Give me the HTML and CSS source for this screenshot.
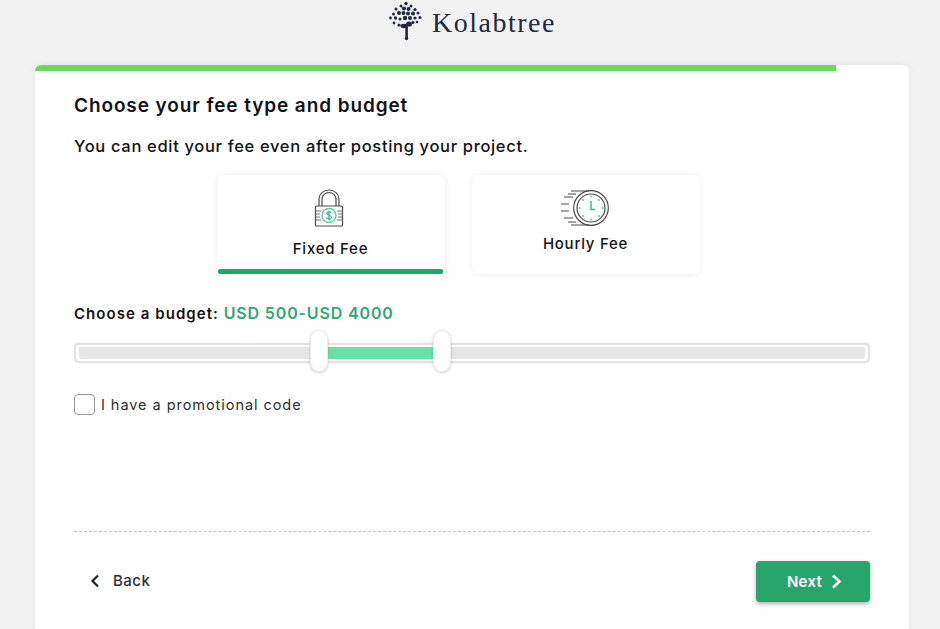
FILE: index.html
```html
<!DOCTYPE html>
<html lang="en">
<head>
<meta charset="utf-8">
<title>Kolabtree</title>
<link rel="stylesheet" href="styles.css">
</head>
<body>
<header class="top">
  <svg class="logo-mark" width="36" height="40" viewBox="0 0 36 40" fill="#22293f">
    <circle cx="17" cy="2.500" r="1.700"/><circle cx="12" cy="5" r="1.500"/><circle cx="22" cy="5" r="1.500"/>
    <circle cx="7" cy="8" r="1.500"/><circle cx="15" cy="7.500" r="2"/><circle cx="19.500" cy="8" r="2"/><circle cx="26" cy="8.500" r="1.600"/>
    <circle cx="4.500" cy="13" r="1.500"/><circle cx="10" cy="12" r="2"/><circle cx="14.500" cy="12" r="2"/><circle cx="19" cy="12.500" r="2"/><circle cx="24" cy="12.500" r="2"/><circle cx="29" cy="12" r="1.500"/>
    <circle cx="1.500" cy="17" r="1.400"/><circle cx="6.500" cy="17" r="1.700"/><circle cx="11" cy="18" r="1.500"/><circle cx="16" cy="17" r="2.200"/><circle cx="21" cy="17" r="2"/><circle cx="26" cy="17" r="1.600"/><circle cx="31" cy="16.500" r="1.500"/>
    <circle cx="5" cy="22" r="1.400"/><circle cx="10" cy="24" r="1.600"/><circle cx="24" cy="21.500" r="1.500"/><circle cx="28" cy="21" r="1.300"/>
    <ellipse cx="15" cy="25" rx="3.500" ry="2.200"/><ellipse cx="20" cy="23" rx="3" ry="2.600"/>
    <path d="M16.300 24h2.600v13h-2.600z"/><circle cx="17.500" cy="37.500" r="1.700"/>
  </svg>
  <span class="logo-text">Kolabtree</span>
</header>
<main class="card">
  <div class="progress"></div>
  <div class="body">
    <h1 class="title">Choose your fee type and budget</h1>
    <p class="sub">You can edit your fee even after posting your project.</p>
    <div class="options">
      <div class="option option-active">
        <svg class="icon-lock" width="30" height="38" viewBox="0 0 30 38" fill="none">
          <path d="M5 17V10a10 9 0 0 1 20 0v7" stroke="#4a4a4a" stroke-width="1.200"/>
          <path d="M8 17V10a7 6.500 0 0 1 14 0v7" stroke="#4a4a4a" stroke-width="1.200"/>
          <rect x="1.500" y="17" width="27" height="20" rx="1" stroke="#4a4a4a" stroke-width="1.200"/>
          <path d="M2 22h5M2 25h4M2 28h4M2 31h5M23 22h5M24 25h4M24 28h4M23 31h5" stroke="#777" stroke-width="1"/>
          <circle cx="15" cy="26.500" r="7" stroke="#5fcf9c" stroke-width="1.400"/>
          <path d="M17.500 23.500c-1-1-4.600-1-4.600 1 0 2.500 4.500 1 4.500 3.500 0 2-3.500 2-5 .8M15 21.800v9.400" stroke="#35b57f" stroke-width="1.200"/>
        </svg>
        <span class="option-label">Fixed Fee</span>
      </div>
      <div class="option">
        <svg class="icon-clock" width="50" height="38" viewBox="0 0 50 38" fill="none">
          <circle cx="31" cy="19" r="17.300" stroke="#4a4a4a" stroke-width="1.200"/>
          <circle cx="31" cy="19" r="14" stroke="#4a4a4a" stroke-width="1.200"/>
          <path d="M11 2h18M4 8h9M1 15h8M1 22h8M4 29h9M11 36h18M8 5h8M8 33h8" stroke="#4a4a4a" stroke-width="1.200"/>
          <path d="M31 12v8.500h4" stroke="#35b57f" stroke-width="1.400"/>
          <g fill="#5fcf9c"><circle cx="31" cy="7.500" r="1"/><circle cx="31" cy="30.500" r="1"/><circle cx="19.500" cy="19" r="1"/><circle cx="42.500" cy="19" r="1"/><circle cx="23" cy="11" r="1"/><circle cx="39" cy="11" r="1"/><circle cx="23" cy="27" r="1"/><circle cx="39" cy="27" r="1"/></g>
        </svg>
        <span class="option-label">Hourly Fee</span>
      </div>
    </div>
    <p class="budget">Choose a budget: <span class="budget-value">USD 500-USD 4000</span></p>
    <div class="slider">
      <div class="rail">
        <div class="rail-fill"></div>
      </div>
      <span class="handle handle-min"></span>
      <span class="handle handle-max"></span>
    </div>
    <label class="promo"><span class="checkbox"></span><span>I have a promotional code</span></label>
    <div class="spacer"></div>
    <div class="footer">
      <div class="back">
        <svg width="10" height="14" viewBox="0 0 10 14" fill="none"><path d="M8 1.500 2.500 7 8 12.500" stroke="#1d2433" stroke-width="2.200"/></svg>
        <span>Back</span>
      </div>
      <button class="next" type="button">Next
        <svg width="11" height="15" viewBox="0 0 11 15" fill="none"><path d="M2 1.500 8.500 7.500 2 13.500" stroke="#fff" stroke-width="2.600"/></svg>
      </button>
    </div>
  </div>
</main>
</body>
</html>
```

FILE: styles.css
```css
* { box-sizing: border-box; }
html, body { height: 100%; }
body {
  margin: 0;
  background: #f2f2f2;
  font-family: "Inter", "Liberation Sans", sans-serif;
  color: #111319;
  overflow: hidden;
  height: 629px;
}
.top {
  height: 65px;
  display: flex;
  justify-content: center;
  align-items: flex-start;
  gap: 7px;
  padding-top: 1px;
  padding-left: 5px;
}
.logo-mark { flex: none; }
.logo-text {
  font-family: "Liberation Serif", serif;
  font-size: 28px;
  font-weight: 400;
  letter-spacing: 1.500px;
  color: #22293f;
  line-height: 40px;
  margin-top: 2px;
}
.card {
  width: 874px;
  margin-left: 35px;
  height: 564px;
  background: #fff;
  border-radius: 6px 6px 0 0;
  box-shadow: 0 0 6px rgba(0,0,0,.07);
  overflow: hidden;
}
.progress {
  width: 801px;
  height: 6px;
  background: #66d95e;
}
.body {
  padding: 0 39px;
  display: flex;
  flex-direction: column;
  height: 558px;
}
.title {
  margin: 23px 0 0;
  font-size: 19px;
  line-height: 24px;
  font-weight: 600;
  letter-spacing: .9px;
}
.sub {
  margin: 17px 0 0;
  font-size: 16.500px;
  line-height: 22px;
  font-weight: 500;
  letter-spacing: .67px;
}
.options {
  display: flex;
  justify-content: center;
  gap: 27px;
  margin: 18px 0 0;
  padding-right: 28px;
}
.option {
  position: relative;
  width: 228px;
  height: 99px;
  background: #fff;
  border-radius: 6px;
  box-shadow: 0 0 7px rgba(0,0,0,.07);
  display: flex;
  flex-direction: column;
  align-items: center;
  padding-top: 14px;
  gap: 7px;
  font-size: 15px;
}
.option-active { gap: 12px; }
.option-active::after {
  content: "";
  position: absolute;
  left: 1px;
  right: 2px;
  bottom: 0;
  height: 5px;
  background: #22a56b;
  border-radius: 2px;
}
.icon-lock { margin-right: 4px; }
.icon-clock { margin-right: 2px; }
.option-label {
  font-weight: 500;
  line-height: 20px;
  letter-spacing: .75px;
}
.budget {
  margin: 29px 0 0;
  font-size: 15px;
  line-height: 20px;
  font-weight: 600;
  letter-spacing: 1.050px;
}
.budget-value {
  color: #2fa876;
  font-size: 16px;
  letter-spacing: .85px;
}
.slider {
  position: relative;
  margin-top: 19px;
  height: 20px;
}
.rail {
  height: 20px;
  border: 2px solid #e3e3e3;
  border-radius: 5px;
  background: #fff;
  padding: 2px 3px 2px 3px;
  box-shadow: 0 0 2px rgba(0,0,0,.1);
}
.rail-fill {
  height: 100%;
  border-radius: 2px;
  background: linear-gradient(to right, #e6e6e6 0 31.500%, #6ae0a6 31.500% 45%, #e6e6e6 45%);
}
.handle {
  position: absolute;
  top: -13px;
  width: 18px;
  height: 42px;
  background: #fff;
  border-radius: 9px;
  border: 1px solid #ececec;
  box-shadow: 0 1px 3px rgba(0,0,0,.2);
}
.handle-min { left: 236px; }
.handle-max { left: 359px; }
.promo {
  display: flex;
  align-items: center;
  gap: 6px;
  margin-top: 31px;
  font-size: 14.500px;
  letter-spacing: .95px;
  color: #2b2e38;
  line-height: 20px;
}
.checkbox {
  width: 21px;
  height: 21px;
  border: 1.500px solid #9a9a9a;
  border-radius: 4px;
  background: #fff;
}
.spacer { flex: 1; }
.footer {
  border-top: 1px dashed #c8c8c8;
  height: 98px;
  padding-top: 29px;
  display: flex;
  justify-content: space-between;
  align-items: flex-start;
  flex: none;
}
.back {
  display: flex;
  align-items: center;
  gap: 13px;
  padding: 10px 0 0 16px;
  font-size: 15px;
  font-weight: 500;
  letter-spacing: .5px;
  color: #2b2e38;
}
.next {
  width: 114px;
  height: 41px;
  border: 0;
  border-radius: 4px;
  background: #27a56b;
  color: #fff;
  font: 600 15px "Inter", "Liberation Sans", sans-serif;
  letter-spacing: .3px;
  box-shadow: 0 2px 4px rgba(0,0,0,.3);
  display: flex;
  align-items: center;
  justify-content: center;
  gap: 9px;
  padding: 0 0 0 3px;
}
```
